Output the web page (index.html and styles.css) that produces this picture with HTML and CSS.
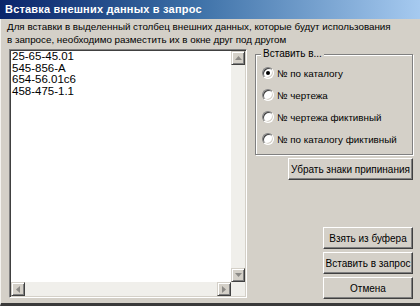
FILE: index.html
```html
<!DOCTYPE html>
<html lang="ru">
<head>
    <meta charset="UTF-8">
    <title>Вставка внешних данных в запрос</title>
    <link rel="stylesheet" href="styles.css">
</head>
<body>
    <div class="window">
        <div class="titlebar">Вставка внешних данных в запрос</div>
        <div class="client">
            <p class="hint">Для вставки в выделенный столбец внешних данных, которые будут использования<br>в запросе, необходимо разместить их в окне друг под другом</p>
            <div class="main">
                <div class="listbox">
                    <div class="list-text">25-65-45.01<br>545-856-A<br>654-56.01c6<br>458-475-1.1</div>
                    <div class="vscroll">
                        <div class="sb-btn">
                            <svg viewBox="0 0 7 4" width="7" height="4"><polygon points="3.5,0 7,4 0,4" fill="#8c8a86"/></svg>
                        </div>
                        <div class="sb-track"></div>
                        <div class="sb-btn">
                            <svg viewBox="0 0 7 4" width="7" height="4"><polygon points="0,0 7,0 3.5,4" fill="#8c8a86"/></svg>
                        </div>
                    </div>
                    <div class="hscroll">
                        <div class="sb-btn">
                            <svg viewBox="0 0 4 7" width="4" height="7"><polygon points="4,0 4,7 0,3.5" fill="#8c8a86"/></svg>
                        </div>
                        <div class="sb-track"></div>
                        <div class="sb-btn">
                            <svg viewBox="0 0 4 7" width="4" height="7"><polygon points="0,0 4,3.5 0,7" fill="#8c8a86"/></svg>
                        </div>
                    </div>
                    <div class="sb-corner"></div>
                </div>
                <div class="side">
                    <div class="group">
                        <span class="legend">Вставить в...</span>
                        <label class="radio"><span class="dot checked"></span>№ по каталогу</label>
                        <label class="radio"><span class="dot"></span>№ чертежа</label>
                        <label class="radio"><span class="dot"></span>№ чертежа фиктивный</label>
                        <label class="radio"><span class="dot"></span>№ по каталогу фиктивный</label>
                    </div>
                    <button class="btn wide">Убрать знаки припинания</button>
                    <div class="spacer"></div>
                    <button class="btn">Взять из буфера</button>
                    <button class="btn">Вставить в запрос</button>
                    <button class="btn last">Отмена</button>
                </div>
            </div>
        </div>
    </div>
</body>
</html>
```

FILE: styles.css
```css
* { margin: 0; padding: 0; box-sizing: border-box; }
body {
    font-family: "Liberation Sans", Arial, sans-serif;
    font-size: 10px;
    color: #000;
    background: #d4d0c8;
}
.window {
    width: 420px;
    height: 306px;
    background: #d4d0c8;
    border-left: 1px solid #f4f3ef;
    border-bottom: 3px solid #3a3a3a;
    display: flex;
    flex-direction: column;
}
.titlebar {
    height: 19px;
    margin-left: -1px;
    padding-left: 5px;
    background: linear-gradient(to right, #0a246a 0%, #3a6ea5 45%, #a6caf0 100%);
    color: #fff;
    font-weight: bold;
    font-size: 11px;
    letter-spacing: 0.2px;
    line-height: 19px;
    white-space: nowrap;
}
.client {
    padding: 1px 0 0 6px;
}
.hint {
    font-size: 9.8px;
    line-height: 13px;
    white-space: nowrap;
}
.main {
    display: flex;
    margin-top: 3px;
    margin-left: 2px;
}
.listbox {
    width: 238px;
    height: 249px;
    background: #fff;
    border: 1px solid;
    border-color: #808080 #fff #fff #808080;
    box-shadow: inset 1px 1px 0 #404040, inset -1px -1px 0 #d4d0c8;
    padding: 1px;
    display: grid;
    grid-template-columns: 1fr 14px;
    grid-template-rows: 1fr 14px;
}
.list-text {
    padding: 0 0 0 1px;
    font-size: 11.5px;
    line-height: 11.5px;
}
.vscroll, .hscroll {
    display: flex;
    background: #f0efeb;
}
.vscroll { flex-direction: column; }
.sb-track { flex: 1; }
.sb-btn {
    width: 14px;
    height: 14px;
    background: #d4d0c8;
    border: 1px solid;
    border-color: #d4d0c8 #404040 #404040 #d4d0c8;
    box-shadow: inset 1px 1px 0 #fff, inset -1px -1px 0 #808080;
    display: flex;
    align-items: center;
    justify-content: center;
}
.sb-corner { background: #f0efeb; }
.side {
    flex: 1;
    display: flex;
    flex-direction: column;
    margin-left: 8px;
    margin-right: 7px;
}
.group {
    position: relative;
    margin-top: 5px;
    height: 101px;
    border: 1px solid #808080;
    box-shadow: inset 1px 1px 0 #fff, 1px 1px 0 #fff;
    padding: 12px 0 0 6px;
    display: flex;
    flex-direction: column;
    gap: 10px;
}
.legend {
    position: absolute;
    top: -7px;
    left: 5px;
    padding: 0 2px;
    background: #d4d0c8;
    line-height: 12px;
}
.radio {
    display: flex;
    align-items: center;
    gap: 3px;
    height: 12px;
    font-size: 9.8px;
    white-space: nowrap;
}
.dot {
    width: 12px;
    height: 12px;
    border-radius: 50%;
    background: #fff;
    border: 1px solid;
    border-color: #808080 #fff #fff #808080;
    box-shadow: inset 1px 1px 0 #404040, inset -1px -1px 0 #d4d0c8;
    display: flex;
    align-items: center;
    justify-content: center;
}
.dot.checked::after {
    content: "";
    width: 4px;
    height: 4px;
    border-radius: 50%;
    background: #000;
}
.btn {
    align-self: flex-end;
    width: 90px;
    height: 22px;
    font-family: inherit;
    font-size: 10px;
    color: #000;
    background: #d4d0c8;
    border: 1px solid;
    border-color: #fff #404040 #404040 #fff;
    box-shadow: inset -1px -1px 0 #808080;
    margin-top: 3px;
    white-space: nowrap;
}
.btn.wide { width: 125px; }
.btn.last { margin-bottom: -1px; }
.spacer { flex: 1; }
```
